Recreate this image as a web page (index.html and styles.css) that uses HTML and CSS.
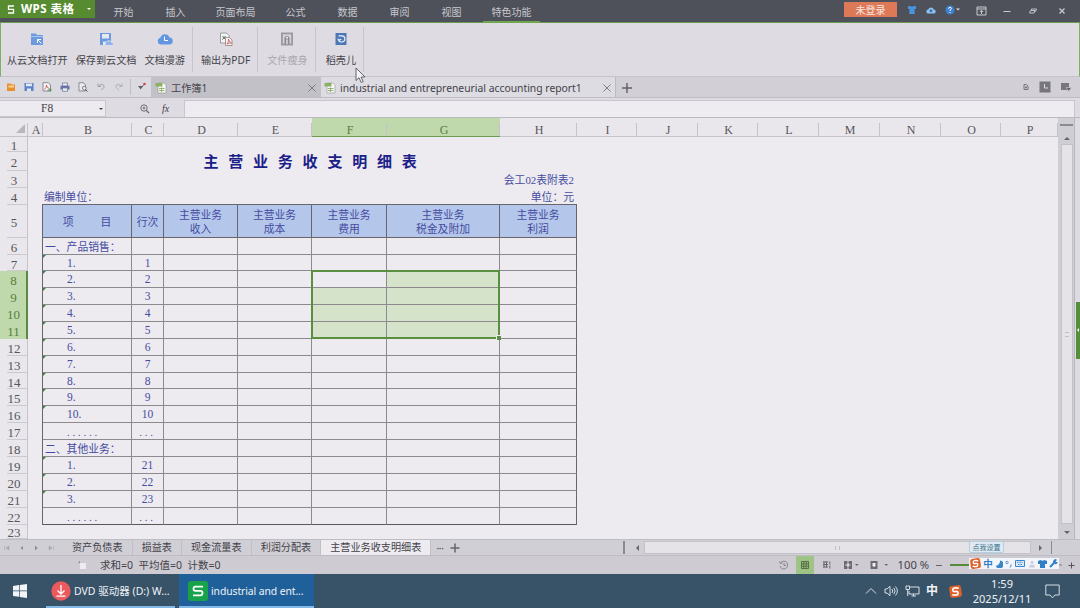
FILE: index.html
```html
<!DOCTYPE html>
<html lang="zh-CN">
<head>
    <meta charset="UTF-8">
    <title>WPS 表格</title>
    <link rel="stylesheet" href="styles.css">
</head>
<body>
    <header class="titlebar">
        <div class="brand">
            <svg width="8" height="9" viewBox="0 0 8 9"><path d="M7 1H1.5v3.3h5V8H1" fill="none" stroke="#fff" stroke-width="1.3"/></svg>
            <b>WPS 表格</b>
            <i class="caret"></i>
        </div>
        <nav class="menu">
            <span>开始</span><span>插入</span><span class="wide">页面布局</span><span>公式</span><span>数据</span><span>审阅</span><span>视图</span><span class="wide active">特色功能</span>
        </nav>
        <button class="login">未登录</button>
        <div class="title-icons">
            <svg width="10" height="10" viewBox="0 0 10 10"><path d="M1 1h2.5q1.5 1.6 3 0H9v3H7.7v5H2.3V4H1z" fill="#4a92dc"/></svg>
            <svg width="10" height="10" viewBox="0 0 10 10"><path d="M2.5 8.5a2 2 0 0 1-.3-4 3 3 0 0 1 5.6 0 2 2 0 0 1-.3 4z" fill="#8ebff0"/><circle cx="5" cy="5.8" r="1.3" fill="#2867b0"/></svg>
            <svg width="15" height="10" viewBox="0 0 15 10"><circle cx="5" cy="5" r="4.6" fill="#3d7fd0"/><path d="M3.6 3.8q0-1.5 1.4-1.5t1.4 1.3q0 .8-1.4 1.6v.8M5 7v1" fill="none" stroke="#fff" stroke-width="1"/><path d="M11 3.5h4l-2 2z" fill="#ddd"/></svg>
            <svg class="box-up" width="11" height="10" viewBox="0 0 11 10"><path d="M1 1h9v8H1zM1 3h9M5.500 8V4.500M3.800 6l1.700-1.700L7.200 6" fill="none" stroke="#c9cad0"/></svg>
            <svg class="win" width="8" height="8" viewBox="0 0 8 8"><path d="M.5 4.500h7" stroke="#c9cad0"/></svg>
            <svg class="win" width="8" height="8" viewBox="0 0 8 8"><path d="M2.500 3V2h5L6.500 4.500H6M1.500 3.500H6L5 6H.5z" fill="none" stroke="#c0c1c8"/></svg>
            <svg class="win" width="8" height="8" viewBox="0 0 8 8"><path d="M1.500 1.500l5 5m0-5l-5 5" stroke="#c9cad0" stroke-width="1.2"/></svg>
        </div>
    </header>

    <section class="ribbon">
        <div class="tool">
            <svg width="14" height="14" viewBox="0 0 14 14"><path d="M1 1.500h5l1 1.500h6v10H1z" fill="#6c9adf"/><path d="M1 4.500h12" stroke="#a9c5ef"/><path d="M7.500 7.500h3.500M7.500 7.500v3.500M7.500 7.500l4 4" stroke="#fff" fill="none"/></svg>
            从云文档打开
        </div>
        <div class="tool">
            <svg width="14" height="14" viewBox="0 0 14 14"><path d="M1 1h11v12H1z" fill="#6c9adf"/><path d="M3 2h7v4.500H3zM4 13V9.500h3V13z" fill="#e8e8f3"/><path d="M7 13.500a2 2 0 0 1 .5-3.500 2.500 2.500 0 0 1 4.500 0 2 2 0 0 1 1.500 3.500z" fill="#8fb3ea" stroke="#e8e8f3" stroke-width=".7"/></svg>
            保存到云文档
        </div>
        <div class="tool">
            <svg width="16" height="14" viewBox="0 0 16 14"><path d="M4 12.500a3.400 3.400 0 0 1-.6-6.700 4.700 4.700 0 0 1 9-.3 3.500 3.500 0 0 1-.4 7z" fill="#6296e2"/><path d="M7.500 4.500v4H11" fill="none" stroke="#fff"/></svg>
            文档漫游
        </div>
        <i class="sep"></i>
        <div class="tool">
            <svg width="14" height="14" viewBox="0 0 14 14"><path d="M1.500 1h6L10 3.500V11H1.500z" fill="#f5f3f6" stroke="#898891" stroke-width=".8"/><path d="M3.500 4l3 3.500m0-3.500l-3 3.500" stroke="#427343"/><path d="M6.500 5.500h4l2.500 2.500v5.500H6.500z" fill="#f5f3f6" stroke="#a07c7d" stroke-width=".8"/><path d="M8 12q2-2.500 1.500-5 .5 3.500 3 4-2.500-.3-4.500 1z" fill="none" stroke="#c45757" stroke-width=".8"/></svg>
            输出为PDF
        </div>
        <i class="sep"></i>
        <div class="tool disabled">
            <svg width="14" height="14" viewBox="0 0 14 14"><path d="M1 .5h12v13H1z" fill="#9b9aa0"/><path d="M2.800 2.300h8.400v9.400H2.800z" fill="#d4d2d8"/><path d="M4.500 12V6.500a2.500 2.500 0 0 1 5 0V12z" fill="#8a8990"/><circle cx="7" cy="5.800" r="1.100" fill="#e6e4ea"/><path d="M6.300 7.500h1.400V12H6.300z" fill="#e6e4ea"/></svg>
            文件瘦身
        </div>
        <i class="sep"></i>
        <div class="tool last">
            <svg width="14" height="14" viewBox="0 0 14 14"><path d="M1.500 1h11v12h-11z" fill="#4c78b5"/><path d="M4.500 3.800h3.300a3.100 3.100 0 0 1 0 6.200q-3 .2-3.500-2.500 1.500 1 3-.2" fill="none" stroke="#f0f2f8" stroke-width="1.200"/></svg>
            稻壳儿
        </div>
        <i class="sep"></i>
    </section>

    <section class="docbar">
        <div class="quick">
            <svg width="10" height="10" viewBox="0 0 10 10"><path d="M1 1.500h3.500l1 1H9v6.500H1z" fill="#e98f2c"/><path d="M2.500 3.500H8v2H2.500z" fill="#f8d49a"/></svg>
            <svg width="10" height="10" viewBox="0 0 10 10"><path d="M.5 1h9v8h-9z" fill="#5b83c8"/><path d="M2 1.500h6v2.800H2zM3 6.500h4V9H3z" fill="#e3e8f4"/></svg>
            <svg width="10" height="10" viewBox="0 0 10 10"><path d="M1 .7h5.500L8.500 3v6H1z" fill="#f3f1f4" stroke="#77767d" stroke-width=".8"/><path d="M2.500 7.500q2-2 2-4.500 0 3 3 3.500" fill="none" stroke="#c25353" stroke-width=".8"/><path d="M5.500 8h3.500M7.700 6.500L9.300 8 7.700 9.500" stroke="#3c8c44" fill="none"/></svg>
            <svg width="10" height="10" viewBox="0 0 10 10"><path d="M2.500 1h5v3h-5z" fill="#eee" stroke="#717ba5" stroke-width=".8"/><path d="M.5 3.800h9v3.700h-9z" fill="#6572ab"/><path d="M2.500 6h5v3.300h-5z" fill="#eee" stroke="#717ba5" stroke-width=".8"/></svg>
            <svg width="10" height="10" viewBox="0 0 10 10"><path d="M1 .7h4.500L7.500 3v6H1z" fill="#eceaf0" stroke="#77767d" stroke-width=".8"/><circle cx="6.300" cy="6.200" r="1.900" fill="#eceaf0" stroke="#66656d" stroke-width=".8"/><path d="M7.700 7.600l1.700 1.900" stroke="#55545c"/></svg>
            <svg width="10" height="10" viewBox="0 0 10 10"><path d="M2 1.500v3h3M2.300 4.300Q5.500.8 7.500 3T5 8" fill="none" stroke="#a2a0a8"/></svg>
            <svg width="10" height="10" viewBox="0 0 10 10"><path d="M8 1.500v3H5M7.700 4.300Q4.500.8 2.500 3T5 8" fill="none" stroke="#b0aeb6"/></svg>
            <i class="sep"></i>
            <svg width="10" height="10" viewBox="0 0 10 10"><path d="M1 4h5L3.700 7.500z" fill="#605f69"/><path d="M4 6l2.500-3" stroke="#605f69"/><circle cx="7.500" cy="2" r="1.300" fill="#cd4546"/></svg>
        </div>
        <div class="doc-tab">
            <svg width="12" height="12" viewBox="0 0 12 12"><path d="M3 1h6l2 2v8H3z" fill="#f7f7f5" stroke="#9d9ca0" stroke-width=".7"/><path d="M.5 1h7v3.500h-7z" fill="#8ab063"/><path d="M4 6.500h5.500M4 8.500h5.500M6.500 5.500V10" stroke="#7ca955" stroke-width=".8"/></svg>
            <span>工作簿1</span>
            <svg width="8" height="8" viewBox="0 0 8 8"><path d="M.5.5l7 7m0-7l-7 7" stroke="#66656b" stroke-width=".8"/></svg>
        </div>
        <div class="doc-tab current">
            <svg width="12" height="12" viewBox="0 0 12 12"><path d="M3 1h6l2 2v8H3z" fill="#f7f7f5" stroke="#9d9ca0" stroke-width=".7"/><path d="M.5 1h7v3.500h-7z" fill="#8ab063"/><path d="M4 6.500h5.500M4 8.500h5.500M6.500 5.500V10" stroke="#7ca955" stroke-width=".8"/></svg>
            <span>industrial and entrepreneurial accounting report1</span>
            <svg width="8" height="8" viewBox="0 0 8 8"><path d="M.5.5l7 7m0-7l-7 7" stroke="#66656b" stroke-width=".8"/></svg>
        </div>
        <svg class="new-tab" width="10" height="10" viewBox="0 0 10 10"><path d="M0 5h10M5 0v10" stroke="#626168" stroke-width="1.500"/></svg>
        <div class="doc-tools">
            <svg width="8" height="8" viewBox="0 0 8 8"><path d="M2 1.500h2.500L6 3v3.500H2zM3 4.500h2M4 3v2.500" fill="none" stroke="#77767d"/></svg>
            <svg width="12" height="12" viewBox="0 0 12 12"><path d="M.5.5h11v11H.5z" fill="#77767d"/><path d="M5.500 3v4H9" fill="none" stroke="#dddbe1"/></svg>
            <svg width="12" height="10" viewBox="0 0 12 10"><path d="M1 1h8v7H1z" fill="#77767d"/><path d="M6 5.500h5.500L8.700 9.500z" fill="#66656b" stroke="#d4d2d8" stroke-width=".6"/></svg>
        </div>
    </section>

    <section class="formula">
        <div class="name-box"><span>F8</span><i class="caret"></i></div>
        <div class="fx">
            <svg width="10" height="10" viewBox="0 0 10 10"><circle cx="4" cy="4" r="3.200" fill="none" stroke="#66656b" stroke-width=".9"/><path d="M2.500 4h3M4 2.500v3" stroke="#66656b" stroke-width=".8"/><path d="M6.300 6.300L9 9" stroke="#66656b" stroke-width="1.200"/></svg>
            <em>fx</em>
        </div>
        <div class="formula-input"></div>
    </section>

    <main class="workspace">
        <div class="sheet" id="sheet">
            <div class="selection"></div>
        </div>
        <div class="vscroll">
            <i class="split"></i>
            <i class="arrow up"></i>
            <div class="thumb"><i></i></div>
            <i class="arrow down"></i>
        </div>
        <div class="side"><i class="side-tab"></i></div>
    </main>

    <section class="sheetbar">
        <div class="sheet-nav">
            <svg width="6" height="6" viewBox="0 0 6 6"><path d="M.5 1v4M5 1L2 3l3 2z" fill="#aaa8b0" stroke="#aaa8b0" stroke-width=".6"/></svg>
            <svg width="6" height="6" viewBox="0 0 6 6"><path d="M4 1L1.500 3 4 5z" fill="#8a8991"/></svg>
            <svg width="6" height="6" viewBox="0 0 6 6"><path d="M2 .8L4.800 3 2 5.200z" fill="#8a8991"/></svg>
            <svg width="6" height="6" viewBox="0 0 6 6"><path d="M5.500 1v4M1 1l3 2-3 2z" fill="#aaa8b0" stroke="#aaa8b0" stroke-width=".6"/></svg>
        </div>
        <span class="sheet-tab">资产负债表</span>
        <span class="sheet-tab">损益表</span>
        <span class="sheet-tab">现金流量表</span>
        <span class="sheet-tab">利润分配表</span>
        <span class="sheet-tab current">主营业务收支明细表</span>
        <span class="more">···</span>
        <svg width="10" height="10" viewBox="0 0 10 10"><path d="M.5 5h9M5 .5v9" stroke="#66656d" stroke-width="1.500"/></svg>
        <div class="hscroll">
            <i class="bar"></i>
            <i class="arrow left"></i>
            <div class="track"><i></i></div>
            <i class="arrow right"></i>
            <i class="bar thin"></i>
        </div>
    </section>

    <section class="status">
        <svg class="rec" width="8" height="8" viewBox="0 0 8 8"><path d="M2 2h6v6H2z" fill="#eeecf1"/><path d="M0 1.500h2M1.500 0v2" stroke="#999"/></svg>
        <span class="sums">求和=0&nbsp; 平均值=0&nbsp; 计数=0</span>
        <div class="views">
            <svg width="10" height="10" viewBox="0 0 10 10"><path d="M1.500 3A3.900 3.900 0 1 1 1 6M.5 1.500L1.500 3.500 3.500 3M5 3v2.500h2" fill="none" stroke="#77767d" stroke-width=".8"/></svg>
            <div class="view-on"><svg width="8" height="8" viewBox="0 0 8 8"><path d="M.5.5h7v7h-7zM.5 2.800h7M.5 5.200h7M2.800.5v7M5.200.5v7" fill="none" stroke="#506a43" stroke-width=".9"/></svg></div>
            <svg width="8" height="8" viewBox="0 0 8 8"><path d="M0 1h5M0 3.500h5M0 6h5M1 .5v6M3.500.5v6M6.800.5v3M6.800 4.500v3" fill="none" stroke="#66656d"/></svg>
            <svg class="v4" width="18" height="8" viewBox="0 0 18 8"><path d="M0 0h8v8H0z" fill="#6d6c73"/><path d="M1.500 4h5M4 1.500v5M3 0h2M3 8h2" stroke="#eee" stroke-width="1.200"/><path d="M11 3h3.500l-1.750 2z" fill="#66656d"/></svg>
            <svg class="v5" width="20" height="8" viewBox="0 0 20 8"><path d="M.5 0h7v8h-7z" fill="#6d6c73"/><path d="M2.500 2h3v3l-1.500 1-1.500-1z" fill="#eee"/><path d="M14.500 3H18l-1.750 2z" fill="#66656d"/></svg>
            <span class="zoom">100 %</span>
            <i class="minus"></i>
            <i class="slider"></i>
            <svg class="plus" width="7" height="7" viewBox="0 0 7 7"><path d="M.5 3.500h6M3.500.5v6" stroke="#55545c"/></svg>
        </div>
        <div class="ime">
            <span class="ime-tip">点我设置</span>
            <svg width="11" height="11" viewBox="0 0 12 12"><rect x=".5" y=".5" width="11" height="11" rx="2.500" fill="#df622c" transform="rotate(-8 6 6)"/><path d="M9 3Q3.500 2 3.500 4.300T6 6t2.400 1.800T3 9" fill="none" stroke="#fff" stroke-width="1.500"/></svg>
            <b>中</b>
            <svg width="8" height="8" viewBox="0 0 8 8"><path d="M5 .5A4 4 0 1 1 .8 6 5 5 0 0 0 5 .5z" fill="#3b86c9"/></svg>
            <svg width="8" height="8" viewBox="0 0 8 8"><circle cx="2" cy="2.500" r="1.200" fill="none" stroke="#3b86c9" stroke-width=".8"/><path d="M6 4.500v1.500L5 7.500" fill="none" stroke="#3b86c9"/></svg>
            <svg width="10" height="7" viewBox="0 0 10 7"><path d="M.5.5h9v6h-9z" fill="#dcebf8" stroke="#3b86c9"/><path d="M2 2.300h6M3 4.500h4" stroke="#3b86c9" stroke-dasharray="1 .5"/></svg>
            <svg width="8" height="8" viewBox="0 0 8 8"><circle cx="4" cy="2.200" r="1.500" fill="#ccd"/><path d="M1 7.500q0-3 3-3t3 3z" fill="#ccd"/></svg>
            <svg width="9" height="8" viewBox="0 0 9 8"><path d="M0 1l2.500-1q2 1.300 4 0L9 1v3H7v4H2V4H0z" fill="#2f7ec6"/></svg>
            <svg width="9" height="9" viewBox="0 0 9 9"><path d="M1 8l4-4" stroke="#2f7ec6" stroke-width="1.800"/><path d="M7.500 1a2 2 0 1 0 .8 2.500L6.500 3.500 6 2z" fill="#2f7ec6" stroke="#2f7ec6"/></svg>
        </div>
    </section>

    <footer class="taskbar">
        <div class="start"><svg width="14" height="14" viewBox="0 0 14 14"><path d="M0 2l6-.9v5.500H0zM6.700 1L14 0v6.600H6.700zM0 7.300h6v5.500L0 12zM6.700 7.300H14V14l-7.300-1z" fill="#f2f4f7"/></svg></div>
        <div class="task">
            <svg width="20" height="20" viewBox="0 0 20 20"><circle cx="10" cy="10" r="9.700" fill="#ec5a5e"/><path d="M10 4v9M6.500 9.500L10 13l3.500-3.500M5.500 15.200h9" fill="none" stroke="#fff" stroke-width="1.300"/></svg>
            <span>DVD 驱动器 (D:) W...</span>
        </div>
        <div class="task active">
            <svg width="20" height="20" viewBox="0 0 20 20"><rect width="20" height="20" rx="3" fill="#17a34a"/><path d="M15 5.700H7.500q-2 0-2 2t2 2.200h5q2 0 2 2.200t-2 2.200H5" fill="none" stroke="#fff" stroke-width="1.800"/></svg>
            <span>industrial and ent...</span>
        </div>
        <div class="tray">
            <svg width="12" height="12" viewBox="0 0 12 12"><path d="M1 8.500l5-5 5 5" fill="none" stroke="#e8edf2" stroke-width=".9"/></svg>
            <svg width="14" height="12" viewBox="0 0 14 12"><path d="M1 4h2l3-2.700v9.400L3 8H1zM8 4q1.500 2 0 4M9.800 2.800q2.600 3.200 0 6.400M11.500 1.500q3.800 4.500 0 9" fill="none" stroke="#e8edf2" stroke-width=".9"/></svg>
            <svg width="15" height="12" viewBox="0 0 15 12"><path d="M5 2h9v7H4V6M8.500 9v2M6.500 11h4.500M1 1h3.500v3.500H1zM2.700 4.500V11" fill="none" stroke="#e8edf2" stroke-width=".9"/></svg>
            <b>中</b>
            <svg class="sogou" width="13" height="13" viewBox="0 0 12 12"><rect x=".5" y=".5" width="11" height="11" rx="2.500" fill="#df622c" transform="rotate(-8 6 6)"/><path d="M9 3Q3.500 2 3.500 4.300T6 6t2.400 1.800T3 9" fill="none" stroke="#fff" stroke-width="1.500"/></svg>
            <div class="clock"><span>1:59</span><span>2025/12/11</span></div>
            <svg class="notice" width="15" height="15" viewBox="0 0 15 15"><path d="M.8 1h13.400v10H10l-2.500 2.800L5 11H.8z" fill="none" stroke="#e8edf2" stroke-width=".9"/></svg>
        </div>
    </footer>

    <svg class="cursor" width="11" height="17" viewBox="0 0 11 17"><path d="M1 1v12.500l3-2.800 2.200 4.800 2-1-2.200-4.500h4z" fill="#f4f3f6" stroke="#55545c" stroke-width=".9"/></svg>

    <script src="sheet.js"></script>
</body>
</html>
```
FILE: styles.css
```css
* { box-sizing: border-box; }
body {
    margin: 0;
    width: 1080px;
    height: 608px;
    overflow: hidden;
    position: relative;
    display: flex;
    flex-direction: column;
    background: #dedbe2;
    color: #434249;
    font-family: "Noto Sans", "Noto Sans CJK SC", sans-serif;
    font-size: 10px;
    line-height: 1;
}
svg { display: block; flex: none; }
i { display: block; flex: none; }
.caret {
    border: 2px solid transparent;
    border-top-color: currentColor;
    border-bottom: none;
}

/* title bar */
.titlebar {
    height: 23px;
    display: flex;
    background: #4e5159;
    border-bottom: 1px solid #6a9a50;
    color: #c6c7cd;
}
.brand {
    width: 95px;
    height: 18px;
    display: flex;
    align-items: center;
    padding: 0 4px 0 7px;
    gap: 6px;
    background: #568b2f;
    color: #fff;
    font-size: 11.6px;
    letter-spacing: .4px;
}
.brand b { flex: 1; white-space: nowrap; }
.menu {
    display: flex;
    gap: 15px;
    padding-left: 10px;
    height: 23px;
}
.menu span {
    padding: 7px 8.5px 0;
    border-bottom: 2px solid transparent;
}
.menu .wide { margin: 0 -2px; }
.menu .active { border-color: #70a650; }
.login {
    margin: 2px 0 0 auto;
    width: 53px;
    height: 15px;
    padding: 0;
    border: none;
    background: #de7957;
    color: #f9e7e0;
    font: inherit;
}
.title-icons {
    display: flex;
    align-items: center;
    gap: 9px;
    padding: 0 14px 3px 10px;
}
.title-icons svg:nth-child(3) { margin-right: 2px; }
.title-icons .box-up { margin: 3px 0 0 5px; }
.title-icons .win { margin: 3px 0 0 9px; }
.title-icons .box-up + .win { margin-left: 7px; }
.title-icons .win:last-child { margin-left: 12px; }

/* ribbon */
.ribbon {
    height: 54px;
    display: flex;
    gap: 8px;
    padding: 4px 0 0 6px;
    border: solid #7fb163;
    border-width: 0 1px;
    border-bottom: 1px solid #c6c4cb;
}
.tool {
    display: flex;
    flex-direction: column;
    align-items: center;
    gap: 9px;
    padding-top: 5px;
    font-size: 10.15px;
    white-space: nowrap;
}
.tool.disabled { color: #a9a7ae; padding-left: 1px; }
.tool.last { padding-left: 2px; }
.ribbon .sep {
    width: 1px;
    height: 45px;
    background: #c7c5cc;
    margin: 0 0 0 -1px;
}

/* document tabs */
.docbar {
    height: 21px;
    display: flex;
    align-items: center;
    background: #d2d0d6;
    border-bottom: 1px solid #bfbdc4;
}
.quick {
    width: 151px;
    height: 20px;
    display: flex;
    align-items: center;
    gap: 8px;
    padding-left: 6px;
    background: #dcdae1;
}
.quick .sep {
    width: 1px;
    height: 16px;
    background: #c1bfc6;
    margin: 0 -2px;
}
.doc-tab {
    width: 170px;
    height: 20px;
    display: flex;
    align-items: center;
    padding: 2px 5px 0 4px;
    gap: 4px;
    background: #c2c1c8;
    font-size: 10.2px;
    white-space: nowrap;
}
.doc-tab span { flex: 1; }
.doc-tab.current {
    width: 295px;
    padding: 2px 4px 0 3px;
    background: #dedce3;
    border-right: 1px solid #bdbbc2;
    font-size: 10.35px;
}
.new-tab { margin: 2px 0 0 6px; }
.doc-tools {
    margin-left: auto;
    display: flex;
    align-items: center;
    gap: 9px;
    padding-right: 8px;
}

/* formula bar */
.formula {
    height: 20px;
    display: flex;
    padding-top: 2px;
    border-bottom: 1px solid #bcbac1;
}
.name-box {
    width: 106px;
    display: flex;
    align-items: center;
    justify-content: space-between;
    padding: 1px 2px 0 41px;
    background: #edebf0;
    border: 1px solid #c9c7ce;
    border-left: none;
    font-family: "Liberation Serif", serif;
    font-size: 11.5px;
}
.fx {
    width: 78px;
    display: flex;
    align-items: center;
    gap: 12px;
    padding-left: 34px;
}
.fx em { font: italic 10px "Liberation Serif", serif; }
.formula-input {
    flex: 1;
    margin-right: 5px;
    background: #eeecf1;
    border: 1px solid #c9c7ce;
    border-bottom: none;
}

/* sheet */
.workspace {
    height: 421px;
    display: flex;
    background: #d0ced5;
}
.sheet {
    width: 1058px;
    height: 421px;
    overflow: hidden;
    position: relative;
    background: #edebf0;
    color: #454ba0;
    font-family: "Liberation Serif", "Noto Sans CJK SC", serif;
    font-size: 10.8px;
}
.row {
    display: grid;
    grid-template-columns: 28px 15px 89px 32px 74px 74px 75px 113px 77px 60px 61px 60px 61px 61px 61px 60px 57px;
}
.row > * {
    display: flex;
    align-items: center;
    justify-content: center;
    min-width: 0;
    white-space: pre;
    padding-top: 2px;
}
.heads {
    height: 19px;
    background: #e9e7ec;
    border-bottom: 1px solid #c5c3c9;
    color: #57565b;
    font-size: 12px;
}
.heads span {
    padding: 5px 0 0 1px;
    background: linear-gradient(#c5c3c9, #c5c3c9) right bottom / 1px 13px no-repeat;
}
.heads .on {
    background-color: #c0d9ac;
    color: #55803c;
    box-shadow: 0 1px #6b9b52;
}
.heads .corner::after {
    content: "";
    margin: -3px 0 0 12px;
    border: solid transparent;
    border-width: 0 0 9px 9px;
    border-bottom-color: #b9b7bd;
}
.row .num {
    background: linear-gradient(#cbc9cf, #cbc9cf) right bottom / 20px 1px no-repeat #e9e7ec;
    border-right: 1px solid #c5c3c9;
    color: #57565b;
    font-size: 13px;
    padding-left: 1px;
}
.row .num.on {
    background: #c0d9ac;
    color: #55803c;
    border-right: 2px solid #5b8b41;
}
.row .num.last { padding-top: 0; }
.cell {
    border: solid #8c8a8e;
    border-width: 0 1px 1px 0;
}
.cell.num-cell { font-size: 11.5px; }
.cell.first {
    position: relative;
    justify-content: flex-start;
    padding-left: 2px;
    box-shadow: -1px 0 #68666c;
}
.row .cell.indent { padding-left: 24px; }
.cell.item::before {
    content: "";
    position: absolute;
    left: 0;
    top: 0;
    border: solid transparent;
    border-width: 3px 3px 0 0;
    border-top-color: #388044;
}
.cell.edge { border-right-color: #68666c; }
.cell.dots { letter-spacing: 2.8px; }
.head-row .cell {
    background: #b4c7eb;
    border-color: #68666c;
    box-shadow: 0 -1px #68666c;
    line-height: 14px;
    text-align: center;
    padding-left: 0;
    padding-top: 2px;
    justify-content: center;
}
.head-row .cell.first { box-shadow: 0 -1px #68666c, -1px 0 #68666c, -1px -1px #68666c; }
.bottom .cell { border-bottom-color: #59575c; }
.row .cell.fill { background: #d5e3ca; }
.row .title {
    grid-column: 3 / 10;
    color: #1a2088;
    font-size: 15px;
    font-weight: 600;
    letter-spacing: 9.8px;
    padding: 2px 0 0 10px;
}
.row .note {
    grid-column: 3 / 10;
    justify-content: flex-end;
    padding: 2px 3px 0 1px;
}
.row .note.both { justify-content: space-between; }
.selection {
    position: absolute;
    left: 311px;
    top: 152px;
    width: 189px;
    height: 69px;
    border: 2px solid #5b8f40;
    z-index: 1;
}
.selection::after {
    content: "";
    position: absolute;
    right: -3px;
    bottom: -3px;
    width: 4px;
    height: 4px;
    background: #5b8f40;
    border: solid #edebf0;
    border-width: 1px 0 0 1px;
}

/* scrollbars */
.arrow { border: 3px solid transparent; }
.arrow.up { border-bottom-color: #66656d; border-top: none; }
.arrow.down { border-top-color: #66656d; border-bottom: none; }
.arrow.left { border-right-color: #66656d; border-left: none; }
.arrow.right { border-left-color: #66656d; border-right: none; }
.vscroll {
    width: 17px;
    display: flex;
    flex-direction: column;
    align-items: center;
    padding: 6px 0 5px 1px;
    border-right: 1px solid #b9b7be;
}
.split {
    width: 13px;
    height: 2px;
    background: #8c8b92;
    margin-bottom: 11px;
}
.thumb {
    flex: 1;
    width: 12px;
    margin: 4px 0 7px;
    display: grid;
    place-items: center;
    background: #e5e3e8;
    border: 1px solid #c4c2c9;
}
.thumb i {
    width: 4px;
    height: 5px;
    border: solid #c2c0c6;
    border-width: 1px 0;
}
.side {
    flex: 1;
    padding: 184px 0 0 1px;
    background: #dedce3;
}
.side-tab {
    height: 57px;
    padding: 26px 0 0 1px;
    background: #568f3a;
}
.side-tab::after {
    content: "";
    display: block;
    width: 0;
    border: 2px solid transparent;
    border-right-color: #fff;
    border-left: none;
}

/* sheet tabs */
.sheetbar {
    height: 17px;
    display: flex;
    align-items: center;
    background: #d1cfd6;
    border: solid #bfbdc4;
    border-width: 1px 0;
}
.sheet-nav {
    width: 63px;
    display: flex;
    gap: 8.5px;
    padding-left: 4px;
}
.sheet-tab {
    height: 15px;
    line-height: 15px;
    padding: 0 9px;
    font-size: 10.15px;
    border-right: 1px solid #c1bfc6;
    white-space: nowrap;
}
.sheet-tab.current { background: #edebf0; }
.more { padding: 0 6px 0 5px; letter-spacing: -.3px; }
.hscroll {
    width: 429px;
    margin-left: auto;
    margin-right: 28px;
    display: flex;
    align-items: center;
}
.bar { width: 2px; height: 13px; background: #8c8b92; }
.bar.thin { width: 1px; }
.arrow.left { margin: 0 5px 0 11px; }
.track {
    flex: 1;
    height: 13px;
    display: grid;
    place-items: center;
    background: #e5e3e8;
    border: 1px solid #c4c2c9;
}
.track i {
    width: 5px;
    height: 4px;
    border: solid #c2c0c6;
    border-width: 0 1px;
}
.arrow.right { margin: 0 9px 0 8px; }

/* status bar */
.status {
    height: 18px;
    display: flex;
    align-items: center;
    background: #cecbd3;
    position: relative;
}
.rec { margin-left: 78px; }
.sums { margin-left: 14px; font-size: 10.5px; }
.views {
    margin-left: auto;
    padding-right: 5px;
    display: flex;
    align-items: center;
    height: 18px;
}
.view-on {
    width: 18px;
    height: 18px;
    margin: 0 9px 0 7px;
    display: grid;
    place-items: center;
    background: #9fc385;
}
.v4 { margin-left: 13px; }
.v5 { margin-left: 8px; }
.zoom { margin-left: 8px; font-size: 11.2px; white-space: nowrap; }
.minus { width: 6px; height: 1px; margin: 0 8px 0 7px; background: #66656d; }
.slider { width: 112px; height: 2px; background: linear-gradient(90deg, #568b3b 40px, #a6a4ac 40px); }
.plus { margin-left: 6px; }
.ime {
    position: absolute;
    left: 969px;
    top: 2px;
    width: 90px;
    height: 11px;
    display: flex;
    align-items: center;
    justify-content: space-between;
    padding: 0 1px;
    background: #f2f5fa;
}
.ime b { color: #2f7ec6; font-size: 9.5px; }
.ime-tip {
    position: absolute;
    left: 0;
    top: -17px;
    width: 35px;
    height: 12px;
    border: 1px solid #b4cfde;
    border-radius: 2px;
    background: #dfeaf2;
    color: #3d6f88;
    font-size: 7px;
    line-height: 11px;
    text-align: center;
    white-space: nowrap;
}

/* taskbar */
.taskbar {
    height: 34px;
    display: flex;
    background: #385268;
    color: #eef2f6;
}
.start { width: 46px; display: flex; align-items: center; padding-left: 13px; }
.task {
    width: 129px;
    margin-right: 4px;
    display: flex;
    align-items: center;
    gap: 3px;
    padding: 2px 5px 0;
    border-bottom: 2px solid #83b9e6;
    font-size: 10.5px;
    white-space: nowrap;
}
.task.active {
    width: 135px;
    padding-left: 9px;
    background: #20609a;
    font-size: 10.4px;
    letter-spacing: -.1px;
}
.tray {
    margin-left: auto;
    display: flex;
    align-items: center;
    gap: 7px;
    width: 215px;
}
.tray b { font-size: 12px; margin: 0 2px 0 -1px; }
.sogou { margin-left: 2px; }
.clock {
    width: 60px;
    flex: none;
    margin-left: 3px;
    display: flex;
    flex-direction: column;
    align-items: center;
    gap: 4px;
    font-size: 11px;
}
.tray .notice { margin-left: 6px; }

.cursor {
    position: absolute;
    left: 355px;
    top: 67px;
    z-index: 2;
}
```
FILE: sheet.js
```js
const sheet = document.getElementById('sheet');
const letters = 'ABCDEFGHIJKLMNOP'.split('');

function addRow(className, height) {
    const row = document.createElement('div');
    row.className = 'row ' + className;
    if (height) row.style.height = height + 'px';
    sheet.appendChild(row);
    return row;
}
function addCell(row, className, text) {
    const el = document.createElement('span');
    el.className = className;
    el.textContent = text;
    row.appendChild(el);
}

// Column letters
const heads = addRow('heads');
addCell(heads, 'corner', '');
letters.forEach(l => addCell(heads, l === 'F' || l === 'G' ? 'on' : '', l));

// Text of columns B.. for each table row
const table = {
    5: ['项　 　 目', '行次', '主营业务\n收入', '主营业务\n成本', '主营业务\n费用', '主营业务\n税金及附加', '主营业务\n利润'],
    6: ['一、产品销售：'],
    17: ['......', '...'],
    18: ['二、其他业务：'],
    22: ['......', '...']
};
for (let i = 1; i <= 10; i++) table[6 + i] = [i + '.', String(i)];
for (let i = 1; i <= 3; i++) table[18 + i] = [i + '.', String(20 + i)];

const tops = [137, 152, 171, 188, 205, 238, 255, 271, 288, 305, 322, 339, 356, 373, 389, 406, 423, 440, 457, 474, 491, 508, 525, 539];

for (let n = 1; n <= 23; n++) {
    const selected = n >= 8 && n <= 11;
    const row = addRow(n === 5 ? 'head-row' : n === 22 ? 'bottom' : '', tops[n] - tops[n - 1]);
    addCell(row, selected ? 'num on' : n === 23 ? 'num last' : 'num', n);
    addCell(row, '', '');
    if (n === 2) addCell(row, 'title', '主营业务收支明细表');
    if (n === 3) addCell(row, 'note', '会工02表附表2');
    if (n === 4) {
        addCell(row, 'note both', '');
        row.lastChild.innerHTML = '<span>编制单位：</span><span>单位：元</span>';
    }
    if (!table[n]) continue;
    for (let c = 0; c < 7; c++) {
        const text = table[n][c] || '';
        let cls = 'cell';
        if (c === 0) cls += ' first';
        if (c === 0 && /^[\d.]/.test(text)) cls += ' indent';
        if (c === 0 && /^\d/.test(text)) cls += ' item';
        if (/^\d/.test(text)) cls += ' num-cell';
        if (text.startsWith('...')) cls += ' dots';
        if (c === 6) cls += ' edge';
        if (selected && (c === 4 || c === 5) && !(n === 8 && c === 4)) cls += ' fill';
        addCell(row, cls, text);
    }
}
```
